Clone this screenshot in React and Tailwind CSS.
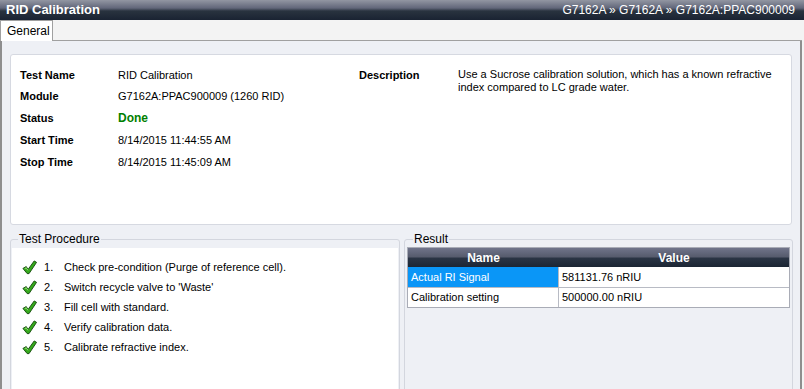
import React from "react";

const fields = [
  { label: "Test Name", value: "RID Calibration" },
  { label: "Module", value: "G7162A:PPAC900009 (1260 RID)" },
  { label: "Status", value: "Done", done: true },
  { label: "Start Time", value: "8/14/2015 11:44:55 AM" },
  { label: "Stop Time", value: "8/14/2015 11:45:09 AM" },
];

const steps = [
  "Check pre-condition (Purge of reference cell).",
  "Switch recycle valve to 'Waste'",
  "Fill cell with standard.",
  "Verify calibration data.",
  "Calibrate refractive index.",
];

const results = [
  { name: "Actual RI Signal", value: "581131.76 nRIU", selected: true },
  { name: "Calibration setting", value: "500000.00 nRIU" },
];

// brush-style green tick
const Check = () => (
  <svg width="15" height="15" viewBox="0 0 16 16">
    <path
      d="M1 9 L4.5 7 L6.5 10 L13 1 L15.5 2.5 L7.5 14.5 L5.5 14.5 Z"
      fill="#34a81a"
      stroke="#124a0a"
      strokeWidth="1"
      strokeLinejoin="round"
    />
    <path d="M2.8 9.3 L4.5 8.3 L6.3 11" stroke="#a6ec85" strokeWidth="0.9" fill="none" />
  </svg>
);

const App = () => {
  return (
    <div className="w-[804px] h-[389px] overflow-hidden flex flex-col bg-[#f3f3f3] font-['Liberation_Sans',Arial,sans-serif] text-[11px] text-black">
      {/* Title bar */}
      <div className="h-[20px] shrink-0 flex items-center justify-between px-[6px] bg-[linear-gradient(to_bottom,#9296a2_0%,#62677a_40%,#29333f_55%,#1a2332_100%)] text-white">
        <span className="text-[13px] font-bold">RID Calibration</span>
        <span className="text-[12px] pr-[3px]">G7162A » G7162A » G7162A:PPAC900009</span>
      </div>

      {/* Tab strip */}
      <div className="h-[21px] shrink-0 flex items-end">
        <div className="h-[21px] w-[53px] bg-white border border-b-0 border-[#a0a0a0] flex items-center pl-[6px] text-[12px]">
          General
        </div>
        <div className="flex-1 border-b border-[#a0a0a0] mr-[2px]" />
      </div>

      {/* Content */}
      <div className="flex-1 bg-[#eef0f5] border-l-2 border-r-2 border-[#8e8e8e] mr-[2px] px-[8px] pt-[13px] flex flex-col">
        {/* Info box */}
        <div className="h-[171px] shrink-0 bg-white border border-[#d6d9e1] rounded-[3px] flex pt-[9px] pl-[9px]">
          <div className="w-[339px]">
            {fields.map((f) => (
              <div key={f.label} className="h-[21.75px] flex items-center">
                <span className="w-[98px] font-bold">{f.label}</span>
                <span className={f.done ? "text-[#008000] font-bold text-[12px]" : ""}>{f.value}</span>
              </div>
            ))}
          </div>
          <div className="flex">
            <div className="w-[99px] h-[21.75px] flex items-center font-bold">Description</div>
            <div className="w-[318px] leading-[13px] pt-[4px]">
              Use a Sucrose calibration solution, which has a known refractive index compared to LC grade water.
            </div>
          </div>
        </div>

        {/* Bottom groups */}
        <div className="flex gap-[4px] mt-[7px] mr-[-1px]">
          <fieldset className="w-[390px] h-[170px] border border-[#d3d6de] rounded-[3px] px-[1px]">
            <legend className="ml-[6px] px-[1px] text-[12px] leading-[14px]">Test Procedure</legend>
            <div className="bg-white h-full mt-[2px] pt-[9px] pl-[10px]">
              {steps.map((s, i) => (
                <div key={i} className="h-[20px] flex items-center text-[11px]">
                  <span className="w-[22px]"><Check /></span>
                  <span className="w-[20px]">{i + 1}.</span>
                  <span>{s}</span>
                </div>
              ))}
            </div>
          </fieldset>

          <fieldset className="flex-1 h-[170px] border border-[#d3d6de] rounded-[3px] px-[2px]">
            <legend className="ml-[6px] px-[1px] text-[12px] leading-[14px]">Result</legend>
            <div className="mt-[1px] border border-[#a9acb6] bg-white">
              <div className="h-[19px] flex text-white font-bold text-[12px] bg-[linear-gradient(to_bottom,#70748a_0%,#575c6e_45%,#2a3444_55%,#1c2634_100%)]">
                <div className="w-[151px] flex items-center justify-center">Name</div>
                <div className="flex-1 flex items-center justify-center">Value</div>
              </div>
              {results.map((r, i) => (
                <div key={r.name} className={"h-[20px] flex " + (i > 0 ? "border-t border-[#b8bbc4]" : "")}>
                  <div
                    className={
                      "w-[151px] flex items-center pl-[3px] border-r border-[#b8bbc4] " +
                      (r.selected ? "bg-[#0a96f7] text-white" : "")
                    }
                  >
                    {r.name}
                  </div>
                  <div className="flex-1 flex items-center pl-[3px]">{r.value}</div>
                </div>
              ))}
            </div>
          </fieldset>
        </div>
      </div>
    </div>
  );
};

export default App;
